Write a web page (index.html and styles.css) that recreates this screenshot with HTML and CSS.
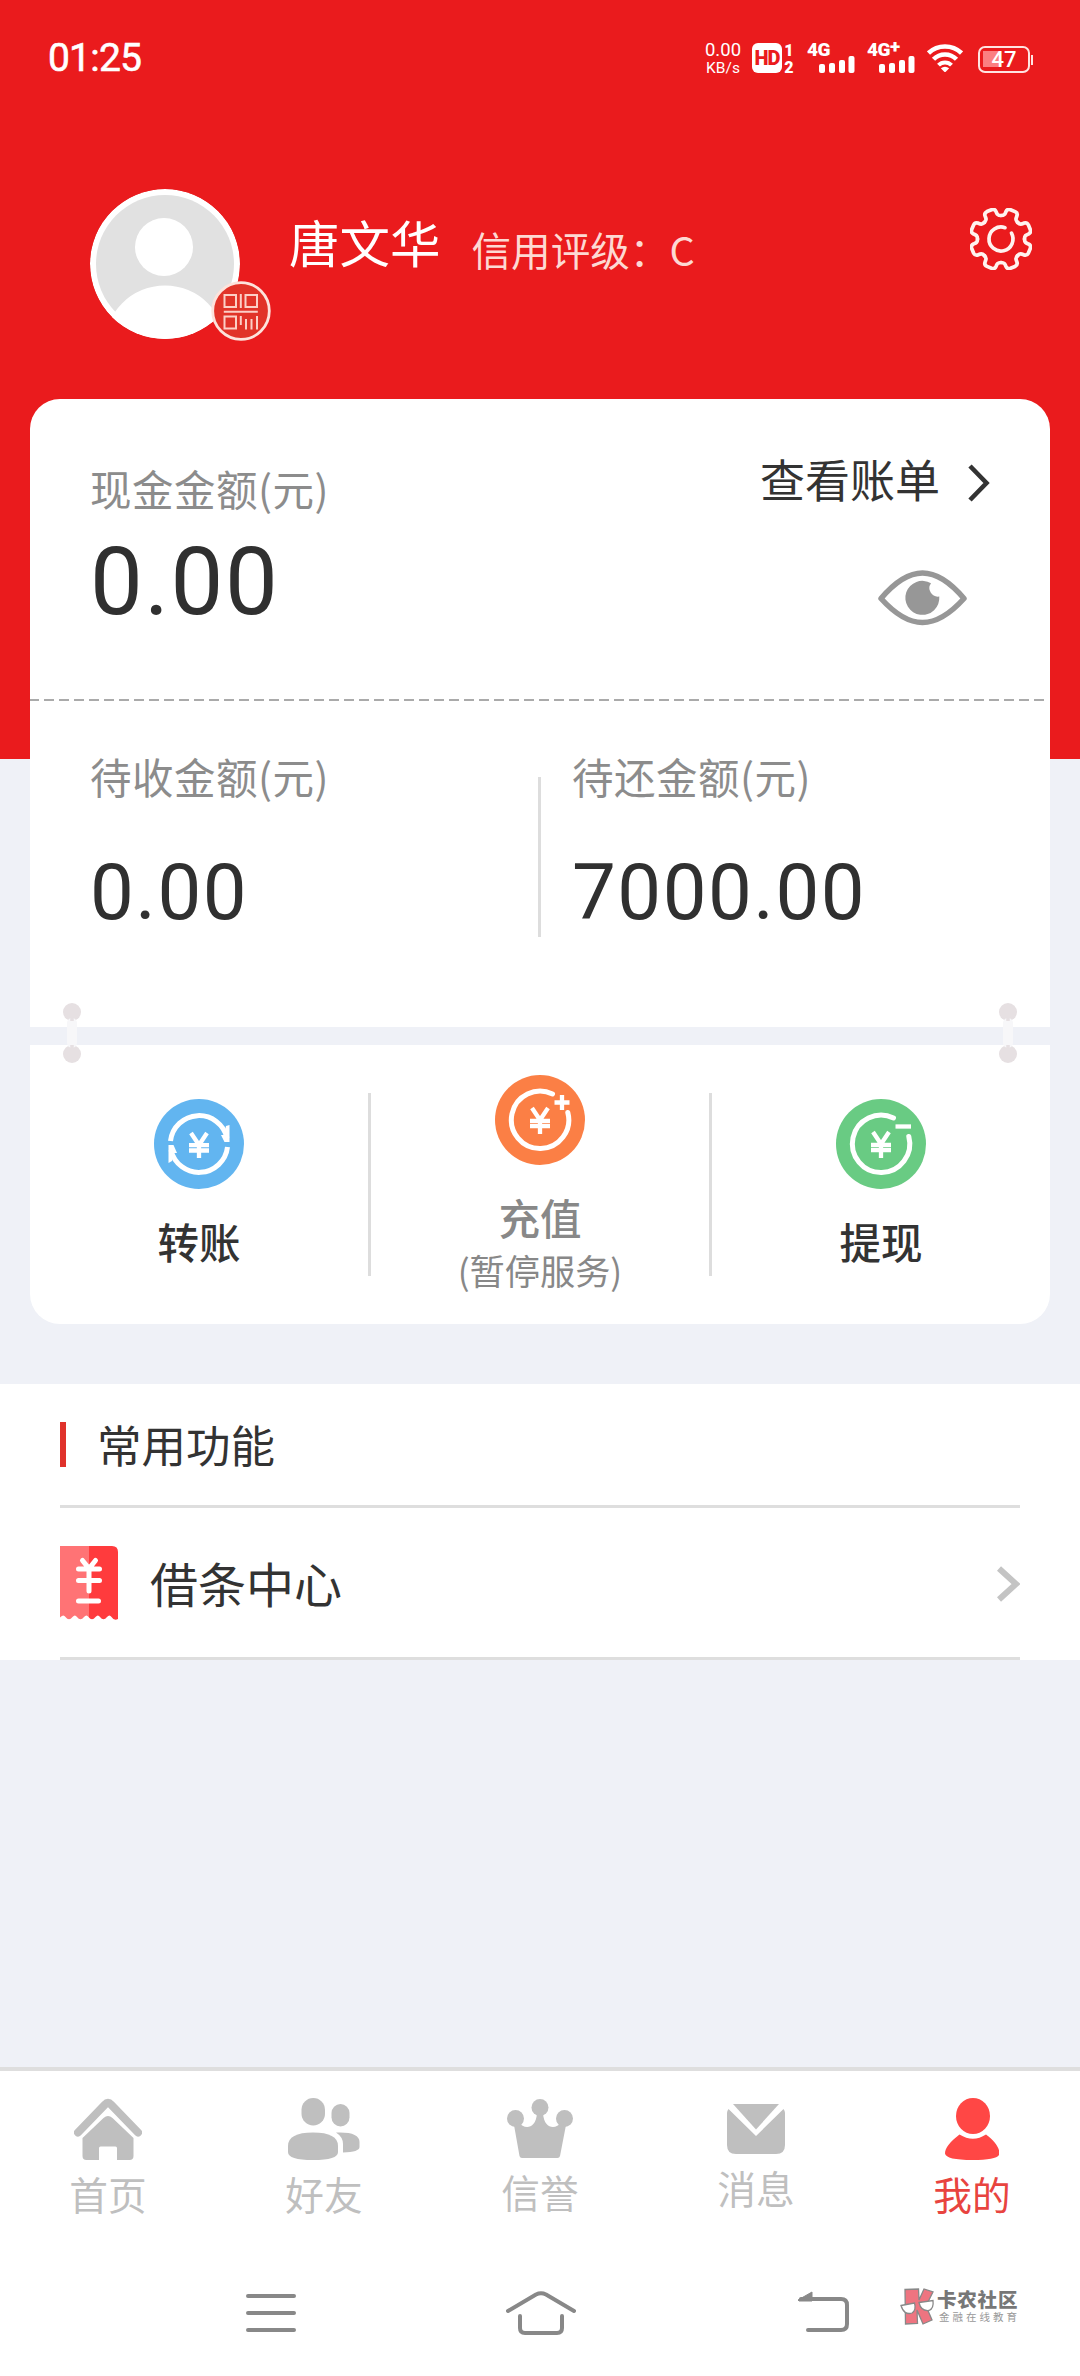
FILE: index.html
```html
<!DOCTYPE html>
<html lang="zh-CN">
<head>
<meta charset="utf-8">
<title>我的</title>
<link rel="stylesheet" href="styles.css">
</head>
<body>
<div class="page">
  <header class="status">
    <span class="clock">01:25</span>
    <div class="status-icons">
      <div class="speed"><span class="speed-num">0.00</span><span class="speed-unit">KB/s</span></div>
      <span class="hd">HD</span>
      <div class="sims"><span>1</span><span>2</span></div>
      <div class="signal">
        <span class="net">4G</span>
        <svg class="bars" width="36" height="17" viewBox="0 0 36 17" fill="#fff"><rect x="0" y="8" width="6" height="9" rx="2"/><rect x="10" y="7" width="6" height="10" rx="2"/><rect x="20" y="4" width="6" height="13" rx="2"/><rect x="29.500" y="0" width="6" height="17" rx="2"/></svg>
      </div>
      <div class="signal">
        <span class="net">4G<span class="plus">+</span></span>
        <svg class="bars" width="36" height="17" viewBox="0 0 36 17" fill="#fff"><rect x="0" y="8" width="6" height="9" rx="2"/><rect x="10" y="7" width="6" height="10" rx="2"/><rect x="20" y="4" width="6" height="13" rx="2"/><rect x="29.500" y="0" width="6" height="17" rx="2"/></svg>
      </div>
      <svg class="wifi" width="36" height="28" viewBox="0 0 36 28" fill="none" stroke="#fff" stroke-width="4.500"><path d="M1.500 9a24 24 0 0 1 33 0"/><path d="M6.500 15.300a16 16 0 0 1 23 0"/><path d="M11.500 21.200a9 9 0 0 1 13 0" stroke-width="4"/><path d="M13.800 24.300Q18 21 22.200 24.300L18 28.500z" fill="#fff" stroke="none"/></svg>
      <div class="battery"><span class="battery-box">47</span><i class="battery-tip"></i></div>
    </div>
  </header>

  <section class="profile">
    <div class="avatar">
      <svg width="150" height="150" viewBox="0 0 150 150"><defs><clipPath id="face"><circle cx="75" cy="75" r="75"/></clipPath></defs><g clip-path="url(#face)"><circle cx="75" cy="75" r="75" fill="#fff"/><circle cx="75" cy="75" r="69" fill="#e1e1e1"/><circle cx="74" cy="58" r="29" fill="#fff"/><circle cx="75" cy="157" r="60.500" fill="#fff"/></g></svg>
      <svg class="qr" width="60" height="60" viewBox="0 0 60 60"><circle cx="30" cy="30" r="28.300" fill="#e13328" stroke="#fde3dc" stroke-width="2.800"/><g fill="none" stroke="#fccfc6" stroke-width="2"><rect x="13.500" y="14" width="11.500" height="12"/><rect x="34.500" y="14" width="11.500" height="12"/><rect x="13.500" y="35.500" width="11.500" height="12"/><path d="M29.800 13v14M12.800 30.800h34M29.800 35v9M35 38v10.500M40.500 38v10.500M46 35v13.500"/></g></svg>
    </div>
    <h1 class="name">唐文华</h1>
    <p class="credit">信用评级：C</p>
    <svg class="gear" width="62" height="62" viewBox="-31 -31 62 62" fill="none" stroke="#fff3ef" stroke-width="3.700" stroke-linecap="round" stroke-linejoin="round"><defs><path id="tooth" d="M0-23.500C3.500-23.500 4-25 5-27.500Q6.200-30.300 9.500-29.300L14-27.400Q17-26 15.930-23C14.870-20.500 14.150-19.100 16.600-16.600"/></defs><use href="#tooth"/><use href="#tooth" transform="rotate(45)"/><use href="#tooth" transform="rotate(90)"/><use href="#tooth" transform="rotate(135)"/><use href="#tooth" transform="rotate(180)"/><use href="#tooth" transform="rotate(225)"/><use href="#tooth" transform="rotate(270)"/><use href="#tooth" transform="rotate(315)"/><path d="M4-11.300A12 12 0 1 0 10.500-5.800"/></svg>
  </section>

  <main>
    <section class="card card-top">
      <div class="cash">
        <div>
          <p class="label">现金金额(元)</p>
          <p class="amount amount-main">0.00</p>
        </div>
        <div class="cash-side">
          <a class="bill">查看账单<svg width="22" height="38" viewBox="0 0 22 38" fill="none" stroke="#333" stroke-width="4.600"><path d="M2 2l16.500 17L2 36"/></svg></a>
          <svg class="eye" width="89" height="56" viewBox="0 0 89 56"><path d="M3 28.500C17 12 30 3 44.500 3S72 12 86 28.500C72 44 59 52.500 44.500 52.500S17 44 3 28.500z" fill="none" stroke="#979797" stroke-width="5.500" stroke-linejoin="round"/><path d="M53 13.200A17 17 0 1 0 61.300 26.500A8.500 8.500 0 0 1 53 13.200z" fill="#979797"/></svg>
        </div>
      </div>
      <svg class="dashes" width="1020" height="2" viewBox="0 0 1020 2"><path d="M-1 1H1016" stroke="#aaa" stroke-width="2" stroke-dasharray="10 5"/></svg>
      <div class="dues">
        <div class="due">
          <p class="label">待收金额(元)</p>
          <p class="amount">0.00</p>
        </div>
        <i class="due-line"></i>
        <div class="due">
          <p class="label">待还金额(元)</p>
          <p class="amount">7000.00</p>
        </div>
      </div>
      <svg class="link link-left" width="20" height="62" viewBox="0 0 20 62"><circle cx="10" cy="10" r="9" fill="#e6e0e2"/><circle cx="10" cy="52" r="9" fill="#e6e0e2"/><rect x="5" y="16" width="10" height="30" rx="5" fill="#f7f7f9"/><path d="M10 10v9M10 43v8" stroke="#e6e0e2" stroke-width="3.500"/></svg>
      <svg class="link link-right" width="20" height="62" viewBox="0 0 20 62"><circle cx="10" cy="10" r="9" fill="#e6e0e2"/><circle cx="10" cy="52" r="9" fill="#e6e0e2"/><rect x="5" y="16" width="10" height="30" rx="5" fill="#f7f7f9"/><path d="M10 10v9M10 43v8" stroke="#e6e0e2" stroke-width="3.500"/></svg>
    </section>

    <section class="card card-actions">
      <a class="action">
        <svg width="90" height="90" viewBox="0 0 90 90"><circle cx="45" cy="45" r="45" fill="#62b5f0"/><g fill="none" stroke="#fff" stroke-width="5"><path d="M16.500 42a28.700 28.700 0 0 1 56.500-3M73.500 48a28.700 28.700 0 0 1-56.500 3"/></g><path d="M75.500 26v17h-5l-3.500-7h3l2-9zM14.500 64V46h5l3.500 8h-3l-2 8z" fill="#fff"/><path d="M37 34l8 12 8-12M35 46.200h20M35 51.500h20M45 46v13" fill="none" stroke="#fff" stroke-width="4.300"/></svg>
        <span class="action-name">转账</span>
      </a>
      <i class="action-line"></i>
      <a class="action action-off">
        <svg width="90" height="90" viewBox="0 0 90 90"><circle cx="45" cy="45" r="45" fill="#fb7f45"/><path d="M57.500 19A28.700 28.700 0 1 0 72.800 37.500" fill="none" stroke="#fff" stroke-width="5" stroke-linecap="round"/><path d="M67 20v15M59.500 27.500h15" stroke="#fff" stroke-width="4.300"/><path d="M37 33l8 12 8-12M35 45.800h20M35 51h20M45 45v14" fill="none" stroke="#fff" stroke-width="4.300"/></svg>
        <span class="action-name">充值</span>
        <span class="action-note">(暂停服务)</span>
      </a>
      <i class="action-line"></i>
      <a class="action">
        <svg width="90" height="90" viewBox="0 0 90 90"><circle cx="45" cy="45" r="45" fill="#69cb83"/><path d="M57.500 19A28.700 28.700 0 1 0 72.800 37.500" fill="none" stroke="#fff" stroke-width="5" stroke-linecap="round"/><path d="M59.500 27.500h15.500" stroke="#fff" stroke-width="4.300"/><path d="M37 33l8 12 8-12M35 45.800h20M35 51h20M45 45v14" fill="none" stroke="#fff" stroke-width="4.300"/></svg>
        <span class="action-name">提现</span>
      </a>
    </section>

    <section class="tools">
      <h2 class="tools-title"><span>常用功能</span></h2>
      <a class="tool">
        <svg width="58" height="74" viewBox="0 0 58 74"><defs><clipPath id="ticket"><path d="M6 0h46q6 0 6 6v67q-4 2-6.500-2-2-3-4.500 0-3.500 4.500-7 0-2-3-4.500 0-3.500 4.500-7 0-2-3-4.500 0-3.500 4.500-7 0-2-3-4.500 0-3.500 4.500-7 0-2-3-5 0-3 4-6 2V6q0-6 6-6z"/></clipPath></defs><g clip-path="url(#ticket)"><path d="M0 0h29v74H0z" fill="#ff7375"/><path d="M29 0h29v74H29z" fill="#ff3b3d"/></g><path d="M22.500 14.500l6.500 8 6.500-8M18.500 23h21M18.500 34.500h21M29 23v22M18.500 55h20" fill="none" stroke="#fff" stroke-width="5" stroke-linecap="round"/></svg>
        <span class="tool-name">借条中心</span>
        <svg class="tool-arrow" width="23" height="36" viewBox="0 0 23 36" fill="none" stroke="#c4c4c4" stroke-width="6"><path d="M2 2.500l17 15.500L2 33.500"/></svg>
      </a>
    </section>
  </main>

  <nav class="tabs">
    <a class="tab">
      <svg width="68" height="62" viewBox="0 0 68 62" fill="#bfbfbf"><path d="M4 34.500L31 6.500Q34 3 37 6.500L64 34.500" fill="none" stroke="#bfbfbf" stroke-width="8" stroke-linecap="round"/><path d="M8.500 40L29.500 20Q34 16 38.500 20L59.500 40V58q0 4-4 4H43V50q0-1.500-1.500-1.500h-15Q25 48.500 25 50v12H12.500q-4 0-4-4z"/></svg>
      <span>首页</span>
    </a>
    <a class="tab">
      <svg width="72" height="62" viewBox="0 0 72 62" fill="#bfbfbf"><rect x="13.500" y="0" width="23.500" height="27.500" rx="11.700"/><rect x="43.500" y="6" width="18" height="22.500" rx="9"/><path d="M0 48Q0 34.500 25 34.500T50 48V54Q50 62 25 62T0 54z"/><path d="M48 34.500Q71.500 33.500 71.500 44v5q0 5-16.500 5.500V46q0-7-7-11.500z"/></svg>
      <span>好友</span>
    </a>
    <a class="tab">
      <svg width="66" height="60" viewBox="0 0 66 60" fill="#bfbfbf"><circle cx="8.500" cy="20.500" r="8.500"/><circle cx="33" cy="9.500" r="8.500"/><circle cx="57.500" cy="20.500" r="8.500"/><path d="M7 27l5-2c5 6 17 7 18-10h6c1 17 13 16 18 10l5 2-6 31q-.5 2-2.500 2H15q-2 0-2.500-2z"/></svg>
      <span>信誉</span>
    </a>
    <a class="tab tab-mail">
      <svg width="58" height="50" viewBox="0 0 58 50" fill="#bfbfbf"><path d="M6 0h46L29 25.500z"/><path d="M1.500 5L29 32 56.500 5Q58 7 58 9v32q0 9-9 9H9q-9 0-9-9V9Q0 7 1.500 5z"/></svg>
      <span>消息</span>
    </a>
    <a class="tab tab-active">
      <svg width="54" height="62" viewBox="0 0 54 62" fill="#ff4745"><ellipse cx="28" cy="18" rx="17" ry="18"/><path d="M14.500 36.500Q28 45 41 36.500C50 43 54.500 50 54.500 55.500Q54 62 27.500 62T0 55.500C0 50 5 44 14.500 36.500z"/></svg>
      <span>我的</span>
    </a>
  </nav>

  <footer class="system">
    <svg class="sys-menu" width="50" height="44" viewBox="0 0 50 44" stroke="#888" stroke-width="4" stroke-linecap="round"><path d="M2 5h46M2 22h46M2 39h46"/></svg>
    <svg class="sys-home" width="70" height="44" viewBox="0 0 70 44" fill="none" stroke="#888" stroke-width="4" stroke-linecap="round" stroke-linejoin="round"><path d="M2 20L30 3.500Q35 1 40 3.500L68 20M14 25v12q0 5 5 5h32q5 0 5-5V25"/></svg>
    <svg class="sys-back" width="51" height="44" viewBox="0 0 51 44"><path d="M3 8h40q6 0 6 6v19q0 6-6 6H10" fill="none" stroke="#888" stroke-width="4" stroke-linecap="round"/><path d="M0 9L14 1v9H1z" fill="#888" stroke="#888" stroke-linejoin="round"/></svg>
    <div class="brand">
      <svg width="35" height="37" viewBox="0 0 35 37"><path d="M5 1.500L18.500 1l.5 11L24 1l9 3-7 14 6 14-9 4-6-14 .5 13.500-12 .5z" fill="#ee7480" stroke="#888" stroke-width="1.300"/><g fill="#fff" stroke="#888" stroke-width="1.300"><path d="M1 17.500l13.500-2.500q2 7-2.500 10-8 2.500-11-7.500zM19 14.500l14-2q1 8-4 10-8 1-10-8z"/></g></svg>
      <div class="brand-text"><strong>卡农社区</strong><small>金融在线教育</small></div>
    </div>
  </footer>
</div>
</body>
</html>
```
FILE: styles.css
```css
* {
  box-sizing: border-box;
  margin: 0;
  padding: 0;
}

body {
  font-family: "Noto Sans CJK SC", sans-serif;
  color: #333;
}

svg {
  display: block;
  flex: none;
}

.page {
  display: flex;
  flex-direction: column;
  width: 1080px;
  height: 2376px;
  background: linear-gradient(#ea1b1d 759px, #eff1f7 759px);
  overflow: hidden;
}

/* status bar */
.status {
  display: flex;
  align-items: center;
  justify-content: space-between;
  height: 116px;
  padding: 0 47px 0 48px;
  color: #fff;
  font-family: Roboto, sans-serif;
}

.clock {
  font-size: 39px;
  font-weight: 400;
  line-height: 60px;
  letter-spacing: -0.8px;
  -webkit-text-stroke: 0.6px #fff;
}

.status-icons {
  display: flex;
  align-items: flex-start;
  height: 30px;
}

.speed {
  display: flex;
  flex-direction: column;
  align-items: center;
  width: 38px;
  margin: -4px 10px 0 0;
}

.speed-num {
  font-size: 18.5px;
  line-height: 22px;
}

.speed-unit {
  margin-top: -2px;
  font-size: 15.5px;
  line-height: 18px;
}

.hd {
  width: 30px;
  height: 30px;
  border-radius: 6px;
  background: #fff;
  color: #ea1b1d;
  font-size: 20px;
  font-weight: 900;
  line-height: 30px;
  text-align: center;
  letter-spacing: -1px;
}

.sims {
  display: flex;
  flex-direction: column;
  align-items: center;
  width: 12px;
  margin: -1px 12px 0 1px;
  font-size: 16px;
  font-weight: 900;
  line-height: 17px;
}

.signal {
  display: flex;
  flex-direction: column;
  width: 48px;
  margin-right: 12px;
}

.net {
  height: 13px;
  font-size: 19px;
  font-weight: 900;
  line-height: 14px;
  letter-spacing: -0.5px;
  white-space: nowrap;
}

.plus {
  position: relative;
  top: -3px;
}

.bars {
  margin-left: 12px;
}

.wifi {
  margin: 1px 15px 0 0;
}

.battery {
  display: flex;
  align-items: center;
  margin-top: 3px;
}

.battery-box {
  width: 52px;
  height: 27px;
  border: 2.5px solid #ffe4e2;
  border-radius: 7px;
  background: linear-gradient(#fb7f81, #fb7f81) 3px 3px / 17px 16px no-repeat;
  font-size: 22px;
  font-weight: 500;
  line-height: 23px;
  text-align: center;
}

.battery-tip {
  width: 2px;
  height: 10px;
  margin-left: 1px;
  background: #ffe4e2;
}

/* profile */
.profile {
  display: flex;
  align-items: flex-start;
  height: 283px;
  padding: 73px 48px 0 90px;
  color: #fff;
}

.avatar {
  position: relative;
}

.qr {
  position: absolute;
  left: 121px;
  top: 92px;
}

.name {
  margin: 22px 0 0 49px;
  font-size: 50.5px;
  font-weight: 400;
  line-height: 60px;
}

.credit {
  margin: 35px 0 0 31px;
  font-size: 39.6px;
  line-height: 50px;
  color: #fdd9d3;
}

.gear {
  margin: 19px 0 0 auto;
}

/* balance card */
.card {
  position: relative;
  width: 1020px;
  margin: 0 auto;
  background: #fff;
}

.card-top {
  height: 628px;
  border-radius: 30px 30px 0 0;
}

.cash {
  display: flex;
  justify-content: space-between;
  height: 300px;
  padding: 59px 60px 0;
}

.label {
  font-size: 41.5px;
  line-height: 60px;
  letter-spacing: 0.5px;
  color: #8c8c8c;
}

.amount {
  margin-top: 42px;
  font-family: Roboto, sans-serif;
  font-size: 78px;
  line-height: 90px;
  letter-spacing: 1.5px;
  color: #303030;
}

.amount-main {
  margin-top: 14px;
  font-size: 94px;
  line-height: 100px;
}

.cash-side {
  display: flex;
  flex-direction: column;
  align-items: flex-end;
  margin-top: -9px;
}

.bill {
  display: flex;
  align-items: center;
  gap: 28px;
  font-size: 45px;
  line-height: 60px;
}

.bill svg {
  margin-top: 8px;
}

.eye {
  margin: 61px 23px 0 0;
}

.dues {
  display: flex;
  padding: 45px 0 0 60px;
}

.due {
  flex: none;
  width: 448px;
}

.due-line {
  flex: none;
  width: 3px;
  height: 160px;
  margin: 31px 31px 0 0;
  background: #ddd;
}

.link {
  position: absolute;
  top: 603px;
  z-index: 1;
}

.link-left {
  left: 32px;
}

.link-right {
  right: 32px;
}

/* actions card */
.card-actions {
  display: flex;
  height: 279px;
  margin-top: 18px;
  border-radius: 0 0 30px 30px;
}

.action {
  display: flex;
  flex: 1;
  flex-direction: column;
  align-items: center;
  padding-top: 54px;
}

.action-off {
  padding-top: 30px;
  color: #888;
}

.action-name {
  margin-top: 22px;
  font-size: 41.5px;
  font-weight: 500;
  line-height: 60px;
}

.action-note {
  margin-top: 3px;
  font-size: 35.2px;
  line-height: 40px;
}

.action-line {
  width: 3px;
  height: 183px;
  margin-top: 48px;
  background: #ddd;
}

/* common tools */
.tools {
  margin-top: 60px;
  padding: 0 60px;
  background: #fff;
}

.tools-title {
  display: flex;
  align-items: center;
  gap: 31px;
  height: 124px;
  border-bottom: 3px solid #dedede;
  font-size: 44.5px;
  font-weight: 400;
}

.tools-title span {
  margin-bottom: 3px;
}

.tools-title::before {
  content: "";
  width: 6px;
  height: 45px;
  background: #e0322b;
}

.tool {
  display: flex;
  align-items: center;
  height: 152px;
  border-bottom: 3px solid #dedede;
  font-size: 48px;
}

.tool-name {
  margin: -1px 0 0 32px;
}

.tool-arrow {
  margin: 2px 0 0 auto;
}

/* tab bar */
.tabs {
  display: grid;
  grid-template-columns: repeat(5, 1fr);
  height: 183px;
  margin-top: auto;
  border-top: 4px solid #dedede;
  background: #fff;
  color: #bfbfbf;
  font-size: 38.7px;
  line-height: 50px;
}

.tab {
  display: flex;
  flex-direction: column;
  align-items: center;
  gap: 8px;
  padding-top: 27px;
}

.tab-mail {
  padding-top: 33px;
}

.tab-active {
  color: #e8443f;
}

/* system navigation */
.system {
  display: flex;
  align-items: center;
  height: 126px;
  background: #fff;
}

.sys-menu {
  margin-left: 246px;
}

.sys-home {
  margin-left: 210px;
}

.sys-back {
  margin-left: 222px;
}

.brand {
  display: flex;
  align-items: center;
  gap: 2px;
  margin: -13px 0 0 51px;
}

.brand-text {
  display: flex;
  flex-direction: column;
  white-space: nowrap;
}

.brand-text strong {
  color: #777;
  font-size: 19.5px;
  font-weight: 900;
  line-height: 20px;
  letter-spacing: 0.8px;
}

.brand-text small {
  margin-left: 2px;
  color: #999;
  font-size: 10.5px;
  line-height: 16px;
  letter-spacing: 3px;
}
```
